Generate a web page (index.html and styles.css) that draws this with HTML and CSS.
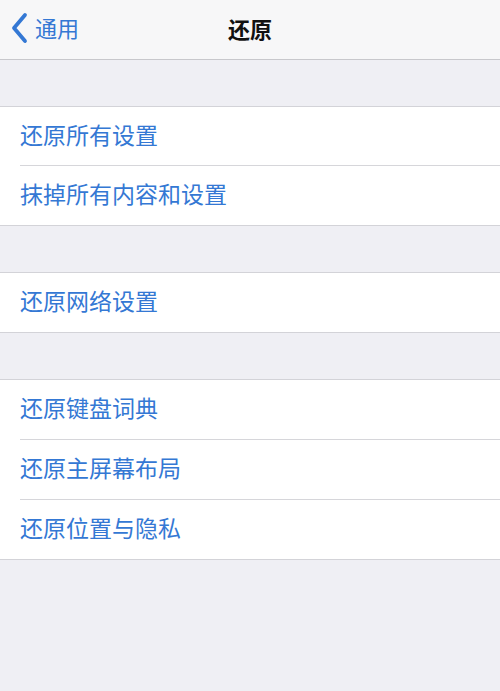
FILE: index.html
```html
<!DOCTYPE html>
<html lang="zh">
<head>
<meta charset="utf-8">
<link rel="stylesheet" href="styles.css">
</head>
<body>
<div class="screen">
  <header class="nav">
    <div class="back">
      <svg class="chevron" width="20" height="32" viewBox="0 0 20 32"><path d="M16 3 L5 16 L16 29" fill="none" stroke="#3478d4" stroke-width="3.8" stroke-linecap="round" stroke-linejoin="round"/></svg>
      <span class="back-text">通用</span>
    </div>
    <div class="title">还原</div>
  </header>
  <div class="gap"></div>
  <ul class="group">
    <li class="row row-short">还原所有设置</li>
    <li class="row">抹掉所有内容和设置</li>
  </ul>
  <div class="gap"></div>
  <ul class="group">
    <li class="row">还原网络设置</li>
  </ul>
  <div class="gap"></div>
  <ul class="group">
    <li class="row">还原键盘词典</li>
    <li class="row">还原主屏幕布局</li>
    <li class="row">还原位置与隐私</li>
  </ul>
</div>
</body>
</html>
```
FILE: styles.css
```css
html, body {
  margin: 0;
  padding: 0;
  background: #efeff4;
}
body {
  font-family: "Noto Sans CJK SC", "Noto Sans", sans-serif;
  width: 500px;
  height: 691px;
  overflow: hidden;
}
.nav {
  height: 60px;
  background: #f7f7f8;
  border-bottom: 1px solid #c8c8cc;
  position: relative;
  display: flex;
  align-items: center;
  box-sizing: border-box;
  padding-bottom: 3px;
}
.back {
  display: flex;
  align-items: center;
  padding-left: 9px;
  gap: 6px;
  color: #3478d4;
  font-size: 22px;
}
.chevron { display: block; }
.back-text { line-height: 1; padding-bottom: 2px; }
.title {
  position: absolute;
  left: 0;
  right: 0;
  top: 0;
  bottom: 3px;
  display: flex;
  align-items: center;
  justify-content: center;
  font-size: 22px;
  font-weight: 700;
  color: #111;
}
.gap { height: 46px; }
.group {
  list-style: none;
  margin: 0;
  padding: 0;
  background: #fff;
  border-top: 1px solid #d3d3d8;
  border-bottom: 1px solid #d3d3d8;
}
.row {
  height: 59px;
  box-sizing: border-box;
  display: flex;
  align-items: center;
  padding-left: 20px;
  padding-bottom: 5px;
  font-size: 23px;
  color: #3478d4;
}
.row-short { height: 58px; }
.row + .row {
  height: 60px;
  border-top: 1px solid #d6d6da;
  margin-left: 20px;
  padding-left: 0;
}
```
